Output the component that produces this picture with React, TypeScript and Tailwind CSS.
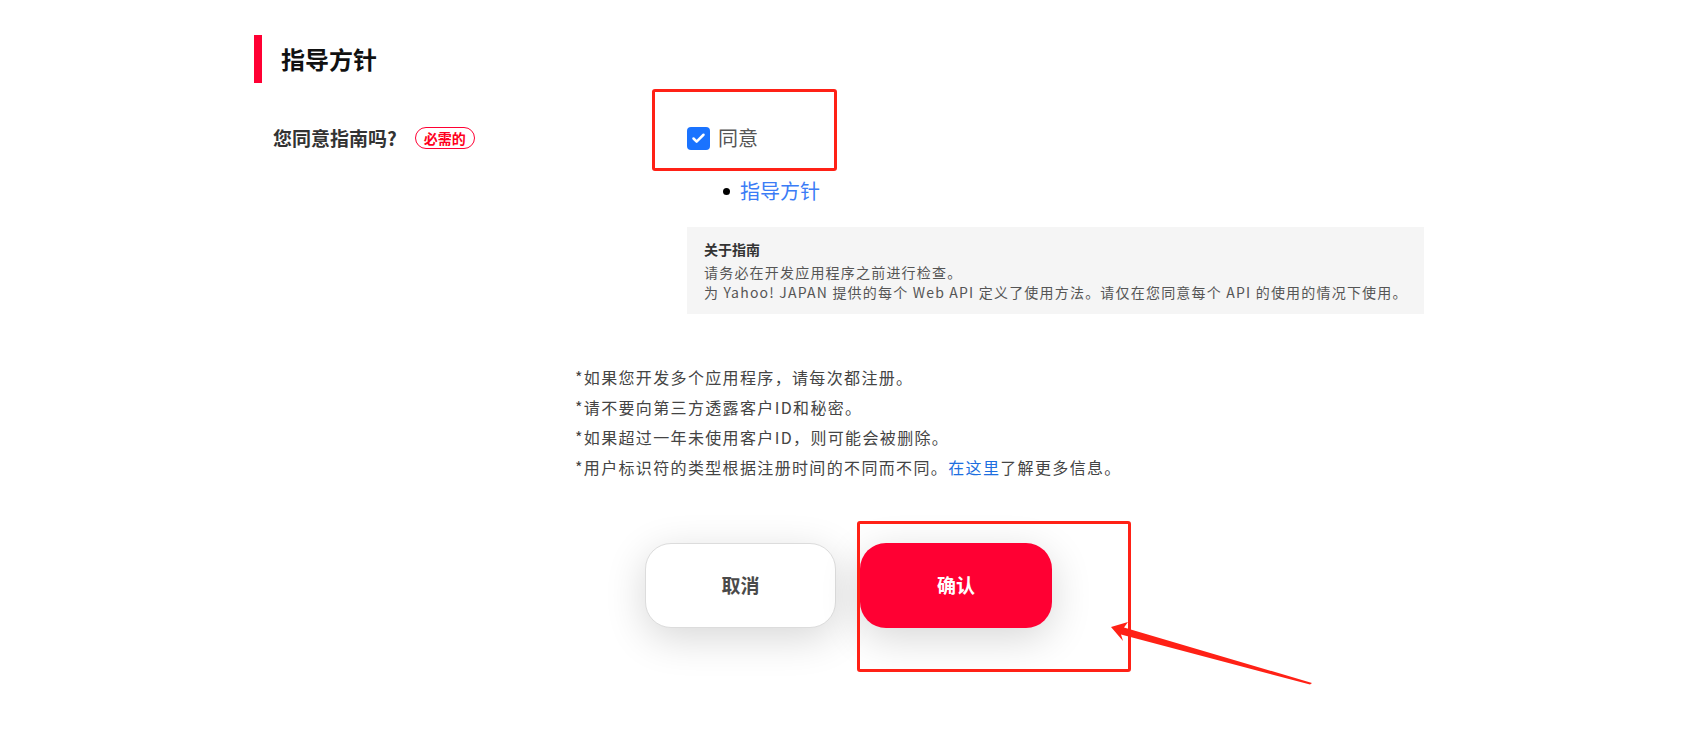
import { Check } from "lucide-react";

const notes = [
  "*如果您开发多个应用程序，请每次都注册。",
  "*请不要向第三方透露客户ID和秘密。",
  "*如果超过一年未使用客户ID，则可能会被删除。",
];

function GuidelineAgreement() {
  return (
    <div className="mt-[43px] flex">
      <div className="flex h-[24px] w-[433px] items-center gap-[18px] pl-[19px]">
        <span className="text-[19px] font-bold text-[#333]">您同意指南吗?</span>
        <span className="flex h-[22px] w-[60px] items-center justify-center rounded-full border border-[#ff0033] text-[14px] font-bold text-[#ff0020]">
          必需的
        </span>
      </div>

      <div>
        <label className="flex h-[24px] items-center gap-[8px]">
          <span className="flex h-[23px] w-[23px] items-center justify-center rounded-[4px] bg-[#1a73ff]">
            <Check className="h-[15px] w-[15px] text-white" strokeWidth={4} />
          </span>
          <span className="text-[20px] text-[#555]">同意</span>
        </label>

        <ul className="mt-[27px] pl-[36px]">
          <li className="flex h-[28px] items-center gap-[10px]">
            <span className="h-[7px] w-[7px] rounded-full bg-black" />
            <a className="text-[20px] text-[#3b7cf6]">指导方针</a>
          </li>
        </ul>

        <div className="mt-[22px] h-[87px] w-[737px] bg-[#f5f5f5] pl-[17px] pt-[12px]">
          <p className="text-[14px] font-semibold leading-[20px] text-[#333]">关于指南</p>
          <p className="mt-[4px] text-[14px] leading-[19.5px] tracking-[1.2px] text-[#555]">
            请务必在开发应用程序之前进行检查。
            <br />
            为 Yahoo! JAPAN 提供的每个 Web API 定义了使用方法。请仅在您同意每个 API 的使用的情况下使用。
          </p>
        </div>
      </div>
    </div>
  );
}

export default function App() {
  return (
    <div className="relative h-[749px] overflow-hidden bg-white font-['Noto_Sans_CJK_SC','Noto_Sans',sans-serif]">
      <div className="mx-auto w-[1184px] pt-[35px]">
        <h2 className="flex h-[48px] items-center border-l-[8px] border-[#ff0033] pl-[19px] text-[24px] font-bold text-[#111]">
          指导方针
        </h2>

        <GuidelineAgreement />

        <div className="ml-[321px] mt-[48px] text-[16px] leading-[30px] tracking-[1.35px] text-[#444]">
          {notes.map((n) => (
            <p key={n}>{n}</p>
          ))}
          <p>
            *用户标识符的类型根据注册时间的不同而不同。
            <a className="text-[#1d6fe0]">在这里</a>了解更多信息。
          </p>
        </div>

        <div className="ml-[391px] mt-[61px] flex gap-[24px]">
          <button className="h-[85px] w-[191px] rounded-[26px] border border-[#dcdcdc] bg-white text-[19px] font-bold text-[#4a4a4a] shadow-[0_10px_40px_rgba(0,0,0,0.16)]">
            取消
          </button>
          <button className="h-[85px] w-[192px] rounded-[26px] bg-[#ff0033] text-[19px] font-bold text-white shadow-[0_10px_40px_rgba(0,0,0,0.16)]">
            确认
          </button>
        </div>
      </div>

      {/* annotation marks drawn over the page */}
      <div className="pointer-events-none absolute left-[652px] top-[89px] h-[82px] w-[185px] rounded-[3px] border-[3px] border-[#ff2116]" />
      <div className="pointer-events-none absolute left-[857px] top-[521px] h-[151px] w-[274px] rounded-[3px] border-[3px] border-[#ff2116]" />
      <svg
        className="pointer-events-none absolute left-0 top-0"
        width="1692"
        height="749"
        viewBox="0 0 1692 749"
      >
        <polygon
          points="1111,627 1128,622 1124,627.5 1312,683 1310,684.5 1121,634.5 1123,641"
          fill="#ff2116"
        />
      </svg>
    </div>
  );
}
